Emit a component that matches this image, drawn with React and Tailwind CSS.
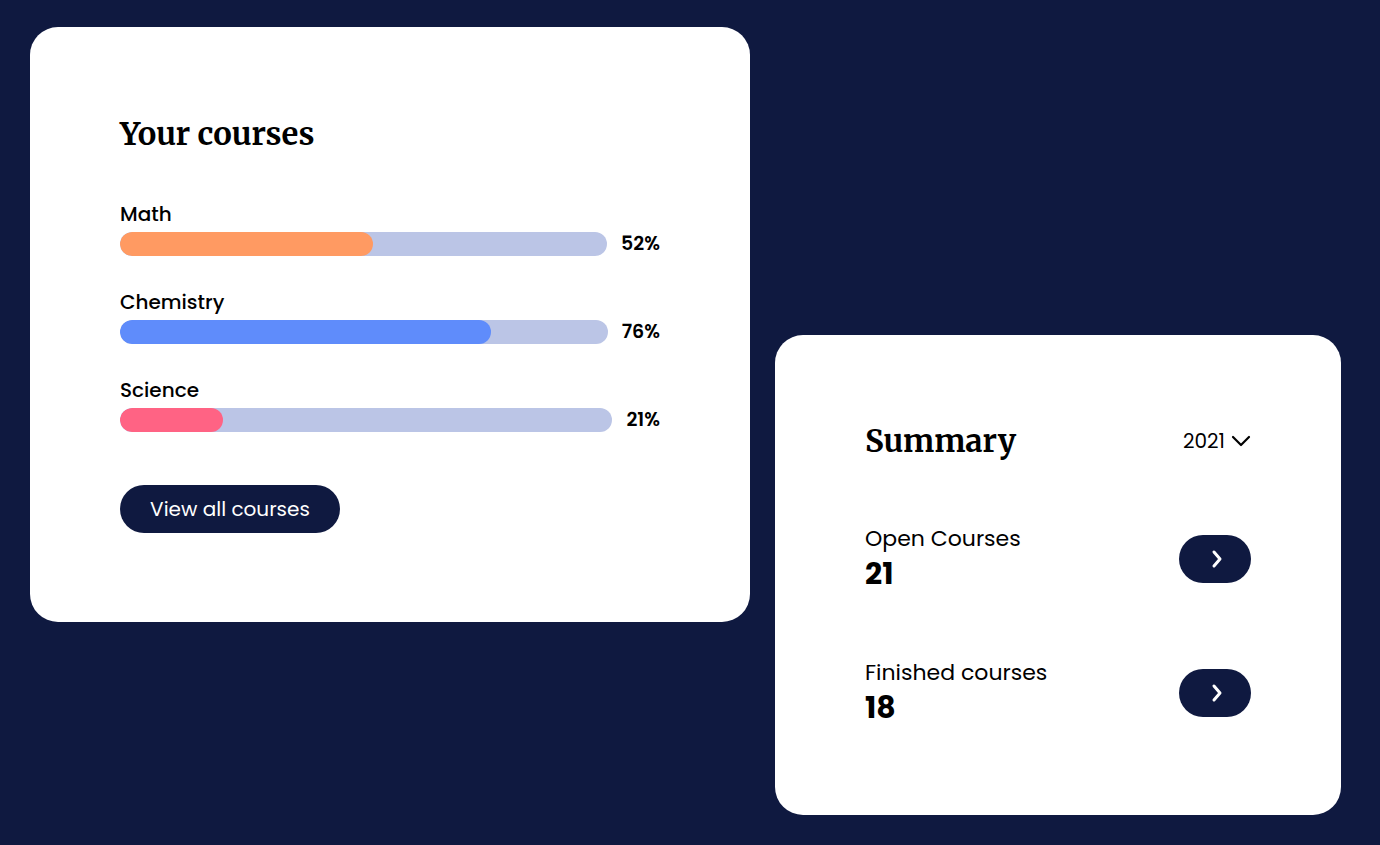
import React from "react";

const courses = [
  { name: "Math", percent: 52, color: "bg-[#ff9a62]" },
  { name: "Chemistry", percent: 76, color: "bg-[#5f8cfb]" },
  { name: "Science", percent: 21, color: "bg-[#ff6384]" },
];

const summary = [
  { label: "Open Courses", value: 21 },
  { label: "Finished courses", value: 18 },
];

const sans = "font-['Poppins','DejaVu_Sans',sans-serif]";
const serif = "font-['Merriweather','DejaVu_Serif',serif]";

function CourseBar({ course }) {
  return (
    <div className="flex flex-col gap-1">
      <div className="text-[20px] leading-7 font-medium text-black">{course.name}</div>
      <div className="flex items-center gap-[14px] h-6">
        <div className="flex-1 h-6 rounded-full bg-[#bbc5e6] overflow-hidden">
          <div
            className={`h-full rounded-full ${course.color}`}
            style={{ width: `${course.percent}%` }}
          />
        </div>
        <div className="text-[19px] leading-6 font-semibold text-black">{course.percent}%</div>
      </div>
    </div>
  );
}

function YourCourses() {
  return (
    <div className="self-start w-[720px] bg-white rounded-[28px] px-[90px] pt-[87px] pb-[89px]">
      <h2 className={`${serif} text-[31px] leading-10 font-bold text-black`}>Your courses</h2>
      <div className="mt-[46px] flex flex-col gap-8">
        {courses.map((c) => (
          <CourseBar key={c.name} course={c} />
        ))}
      </div>
      <button className="mt-[53px] h-12 w-[220px] rounded-full bg-[#0f1940] text-white text-[20px]">
        View all courses
      </button>
    </div>
  );
}

function Summary() {
  return (
    <div className="self-end w-[566px] bg-white rounded-[28px] px-[90px] pt-[86px] pb-[87px]">
      <div className="flex items-center justify-between h-10">
        <h2 className={`${serif} text-[31px] leading-10 font-bold text-black`}>Summary</h2>
        <button className="flex items-center gap-[6px] text-[20px] text-black">
          2021
          <svg width="20" height="12" viewBox="0 0 20 12" fill="none" stroke="currentColor" strokeWidth="2.2" strokeLinecap="round" strokeLinejoin="round">
            <path d="M2 2l8 8 8-8" />
          </svg>
        </button>
      </div>
      <div className="mt-[63px] flex flex-col gap-16">
        {summary.map((s) => (
          <div key={s.label} className="flex items-center justify-between">
            <div className="flex flex-col">
              <div className="text-[22px] leading-[30px] text-black">{s.label}</div>
              <div className="text-[30px] leading-10 font-bold text-black">{s.value}</div>
            </div>
            <button className="h-12 w-[72px] rounded-full bg-[#0f1940] flex items-center justify-center pl-1 text-white">
              <svg width="12" height="20" viewBox="0 0 12 20" fill="none" stroke="currentColor" strokeWidth="3" strokeLinecap="round" strokeLinejoin="round">
                <path d="M3 3l6 7-6 7" />
              </svg>
            </button>
          </div>
        ))}
      </div>
    </div>
  );
}

export default function App() {
  return (
    <div className={`${sans} min-h-[845px] bg-[#0f1940] flex items-stretch gap-[25px] pl-[30px] pt-[27px] pb-[30px]`}>
      <YourCourses />
      <Summary />
    </div>
  );
}
